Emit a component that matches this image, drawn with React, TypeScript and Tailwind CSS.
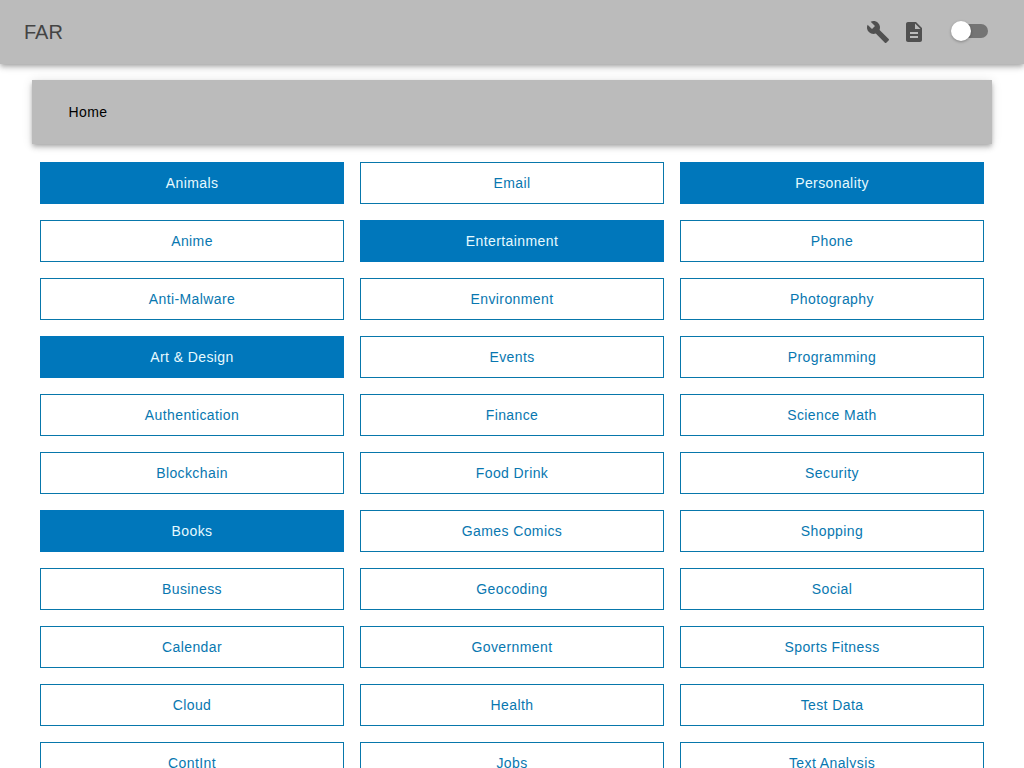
import { MdBuild, MdDescription } from "react-icons/md";

const columns: string[][] = [
  ["Animals", "Anime", "Anti-Malware", "Art & Design", "Authentication", "Blockchain", "Books", "Business", "Calendar", "Cloud", "ContInt"],
  ["Email", "Entertainment", "Environment", "Events", "Finance", "Food Drink", "Games Comics", "Geocoding", "Government", "Health", "Jobs"],
  ["Personality", "Phone", "Photography", "Programming", "Science Math", "Security", "Shopping", "Social", "Sports Fitness", "Test Data", "Text Analysis"],
];

const filled = new Set(["Animals", "Art & Design", "Books", "Entertainment", "Personality"]);

function CategoryButton({ label }: { label: string }) {
  const tone = filled.has(label) ? "border-[#0077bb] bg-[#0077bb] text-[#e6faff]" : "border-[#0877ab] bg-white text-[#0877b0]";
  return (
    <button
      className={`flex h-[42px] w-full items-center justify-center border text-sm leading-6 tracking-[0.4px] ${tone}`}
    >
      {label}
    </button>
  );
}

function Toggle() {
  return (
    <button role="switch" aria-checked="false" aria-label="Theme" className="mb-0.5 flex h-5 w-[37px] items-center">
      <span className="z-10 h-5 w-5 shrink-0 rounded-full bg-white shadow-[0_1px_3px_rgba(0,0,0,0.3)]" />
      <span className="-ml-4 h-3.5 w-[33px] shrink-0 rounded-full bg-[#747474]" />
    </button>
  );
}

export default function App() {
  return (
    <div className="h-screen overflow-hidden bg-white font-['Liberation_Sans',Arial,sans-serif]">
      <header className="flex h-16 items-center bg-[#bbb] pl-6 pr-9 shadow-[0_2px_4px_-1px_rgba(0,0,0,0.2),0_4px_5px_0_rgba(0,0,0,0.14),0_1px_10px_0_rgba(0,0,0,0.12)]">
        <h1 className="text-xl text-[#444]">FAR</h1>
        <div className="ml-auto flex items-center text-[#505050]">
          <MdBuild size={24} className="mr-3" />
          <MdDescription size={24} className="mr-[25px]" />
          <Toggle />
        </div>
      </header>
      <main className="px-8 pt-4">
        <nav className="flex h-16 items-center bg-[#bbb] px-[36.5px] text-sm tracking-[0.4px] text-black shadow-[0_2px_4px_-1px_rgba(0,0,0,0.2),0_4px_5px_0_rgba(0,0,0,0.14),0_1px_10px_0_rgba(0,0,0,0.12)]">
          Home
        </nav>
        <div className="grid grid-cols-3 gap-4 px-2 pt-[18px]">
          {columns.map((items) => (
            <div key={items[0]} className="flex flex-col gap-4">
              {items.map((label) => (
                <CategoryButton key={label} label={label} />
              ))}
            </div>
          ))}
        </div>
      </main>
    </div>
  );
}
